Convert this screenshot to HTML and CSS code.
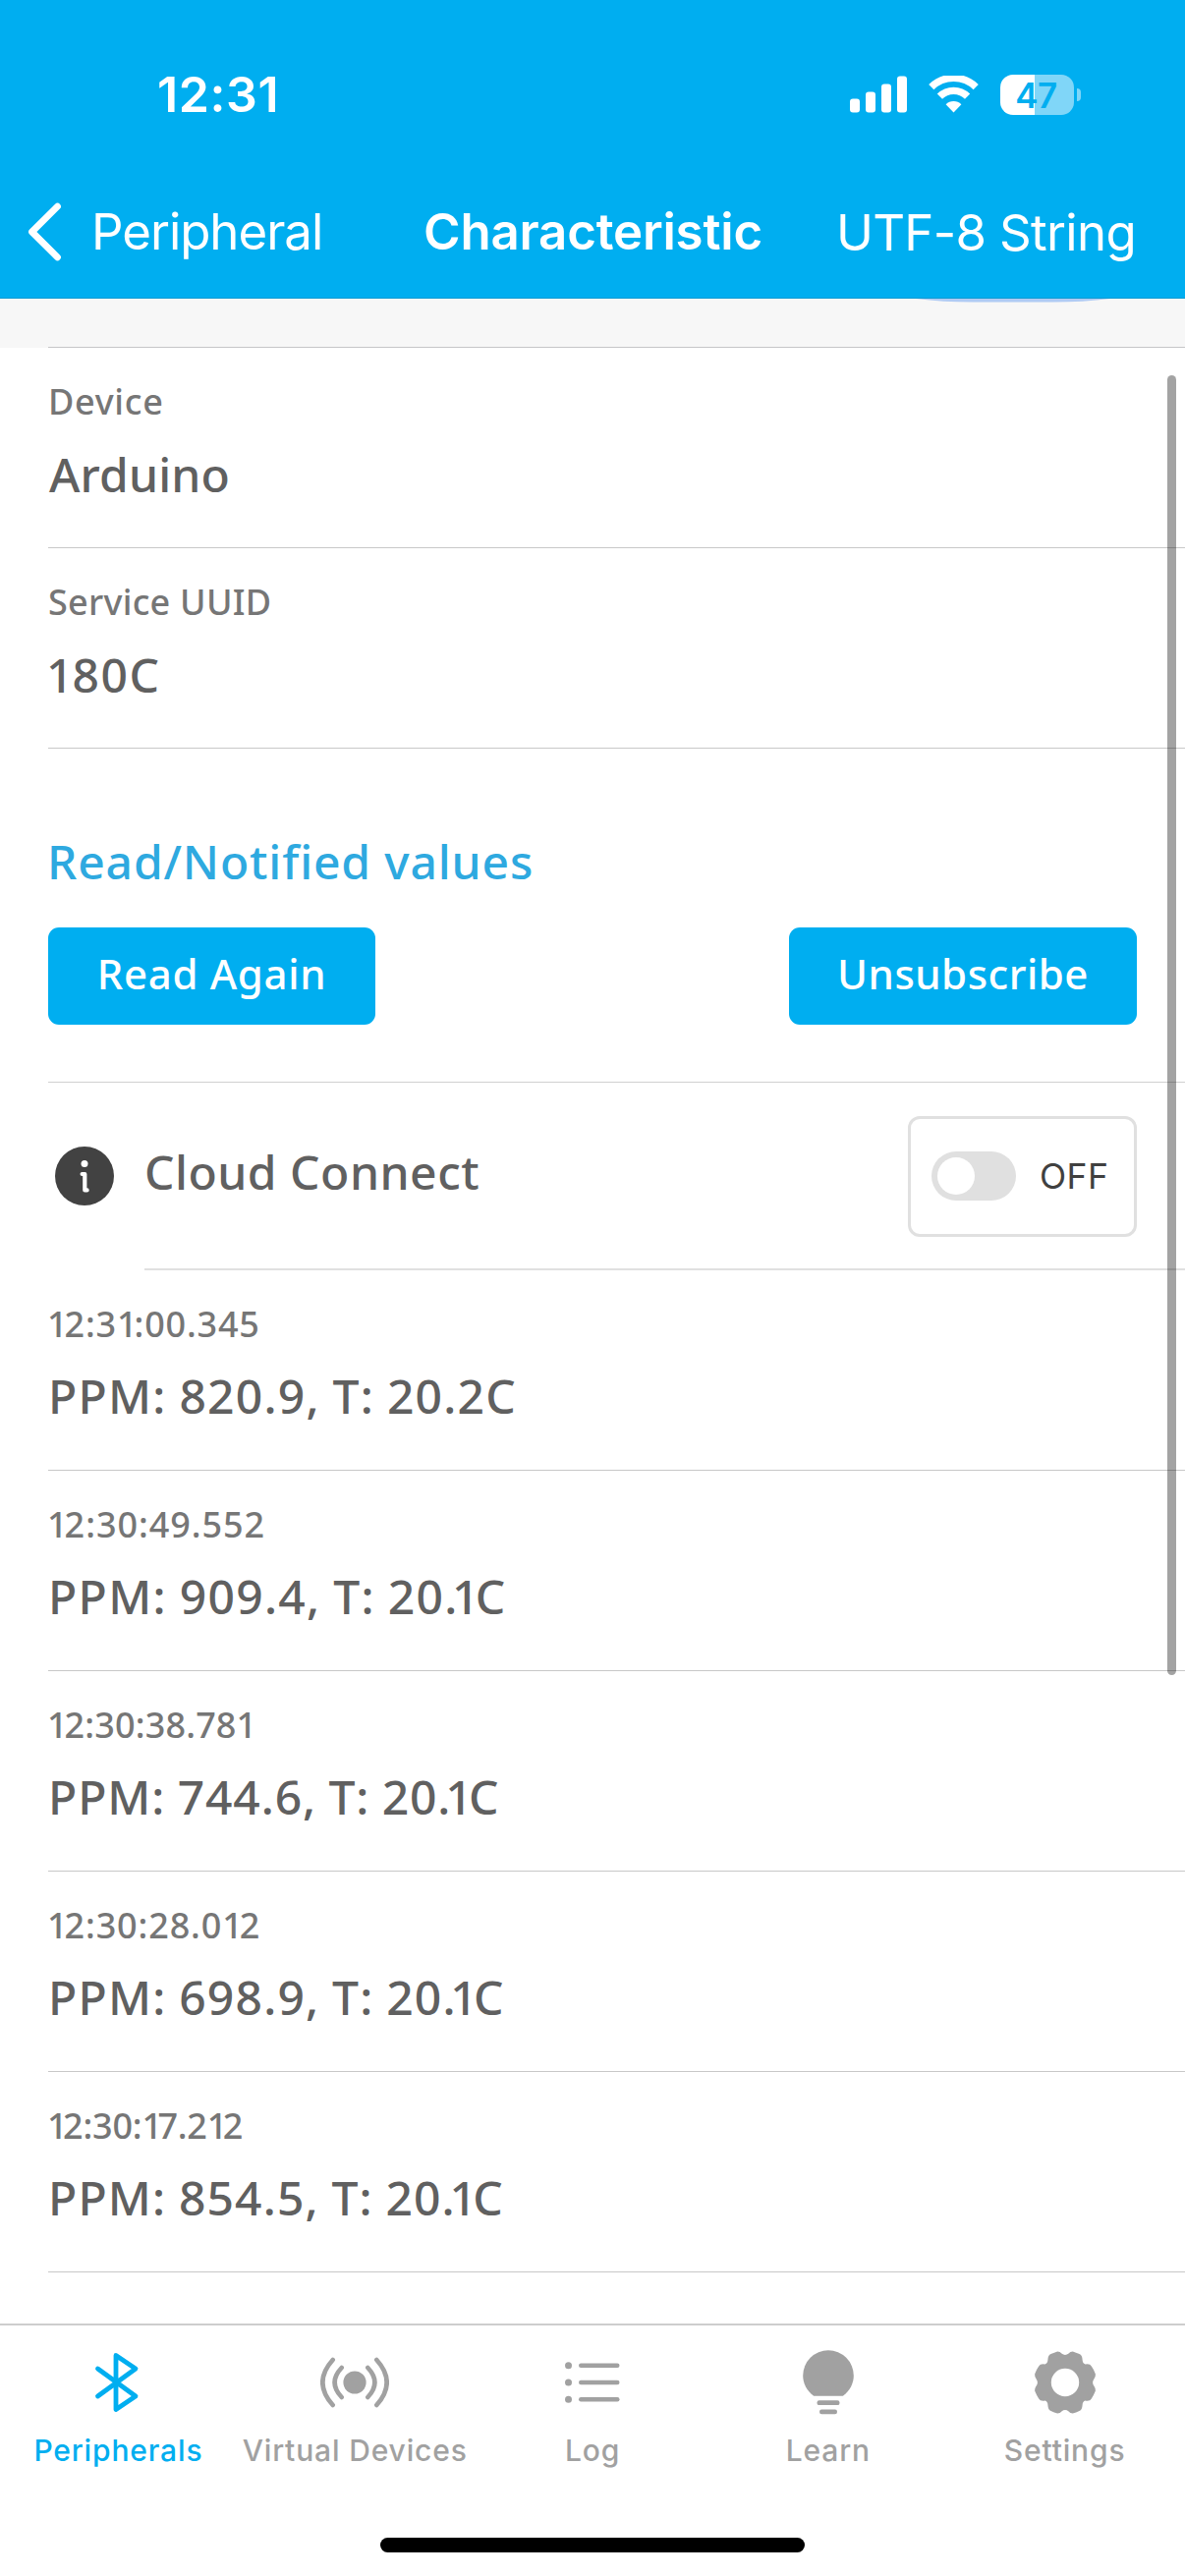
FILE: index.html
```html
<!DOCTYPE html>
<html lang="en">
<head>
<meta charset="utf-8">
<title>Characteristic</title>
<link rel="stylesheet" href="styles.css">
</head>
<body>
<div class="screen">
  <header class="header">
    <div class="status">
      <span class="time">12:31</span>
      <div class="indicators">
        <svg class="signal" width="58" height="38" viewBox="0 0 58 38" fill="#fff">
          <rect x="0" y="23.5" width="10" height="14" rx="3"/><rect x="16" y="16.5" width="10" height="21" rx="3"/><rect x="32" y="8.5" width="10" height="29" rx="3"/><rect x="48" y="0.5" width="10" height="37" rx="3"/>
        </svg>
        <svg class="wifi" width="51" height="38" viewBox="0 0 51 38">
          <g fill="none" stroke="#fff" stroke-width="7.4"><path d="M2.8 11.6A32.5 32.5 0 0 1 48.2 11.6"/><path d="M11.4 21.2A20 20 0 0 1 39.6 21.2"/></g>
          <path d="M17.6 29.3A11.3 11.3 0 0 1 33.4 29.3L25.5 37.5Z" fill="#fff"/>
        </svg>
        <div class="battery"><span class="cell">47</span><span class="cap"></span></div>
      </div>
    </div>
    <nav class="nav">
      <a class="back">
        <svg width="36" height="60" viewBox="0 0 36 60" fill="none" stroke="#fff" stroke-width="6.8" stroke-linecap="round" stroke-linejoin="round"><path d="M30.5 4.2L4.5 30L30.5 55.8"/></svg>
        <span>Peripheral</span>
      </a>
      <h1>Characteristic</h1>
      <a class="format">UTF-8 String</a>
    </nav>
  </header>

  <main class="content">
    <div class="band"><svg width="198" height="4" viewBox="0 0 198 4"><path d="M0 0H198Q170 3.6 140 3.6H58Q28 3.6 0 0Z" fill="#b0cbf4"/></svg></div>
    <section class="row info"><div class="label device">Device</div><div class="value">Arduino</div></section>
    <section class="row info"><div class="label">Service UUID</div><div class="value code"><i>1</i>80C</div></section>
    <section class="values">
      <h2>Read/Notified values</h2>
      <div class="buttons"><button class="read">Read Again</button><button class="unsub">Unsubscribe</button></div>
    </section>
    <section class="cloud">
      <svg class="info-icon" width="60" height="60" viewBox="0 0 60 60"><circle cx="30" cy="30" r="30" fill="#424242"/><circle cx="30" cy="17.5" r="3.5" fill="#fff"/><path d="M27.6 28H30.3V44.4H32.6" fill="none" stroke="#fff" stroke-width="4.2" stroke-linecap="round" stroke-linejoin="round"/></svg>
      <div class="cloud-body"><span class="cloud-title">Cloud Connect</span>
        <div class="toggle"><span class="switch"><span class="knob"></span></span><span class="off">OFF</span></div>
      </div>
    </section>
    <section class="row log r1"><div class="label"><i>1</i>2:3<i>1</i>:00.345</div><div class="value">PPM: 820.9, T: 20.2C</div></section>
    <section class="row log r2"><div class="label"><i>1</i>2:30:49.552</div><div class="value">PPM: 909.4, T: 20<i class="dot">.</i><i>1</i>C</div></section>
    <section class="row log r3"><div class="label"><i>1</i>2:30:38.781</div><div class="value">PPM: 744.6, T: 20<i class="dot">.</i><i>1</i>C</div></section>
    <section class="row log r4"><div class="label"><i>1</i>2:30:28.0<i>1</i>2</div><div class="value">PPM: 698.9, T: 20<i class="dot">.</i><i>1</i>C</div></section>
    <section class="row log r5"><div class="label"><i>1</i>2:30:<i>1</i>7.2<i>1</i>2</div><div class="value">PPM: 854.5, T: 20<i class="dot">.</i><i>1</i>C</div></section>
    <div class="scrollbar"></div>
  </main>

  <footer class="tabbar">
    <div class="tabs">
      <a class="tab active"><svg width="70" height="70" viewBox="-35 -35 70 70" fill="none" stroke="currentColor" stroke-width="4.8" stroke-linecap="round" stroke-linejoin="round"><path d="M-20.5 -14L18 14L-2 27.5V-27.5L18 -14L-20.5 14"/></svg><span>Peripherals</span></a>
      <a class="tab"><svg width="70" height="70" viewBox="-35 -35 70 70" fill="none" stroke="currentColor" stroke-width="4.6" stroke-linecap="round"><circle r="11.6" fill="currentColor" stroke="none"/><path d="M-13.3 -15Q-27.5 0 -13.3 15M13.3 -15Q27.5 0 13.3 15M-22.3 -23Q-43 0 -22.3 23M22.3 -23Q43 0 22.3 23"/></svg><span>Virtual Devices</span></a>
      <a class="tab"><svg width="70" height="70" viewBox="-36 -35 70 70" fill="currentColor"><circle cx="-24.5" cy="-17.3" r="3.5"/><circle cx="-24.5" r="3.5"/><circle cx="-24.5" cy="17.3" r="3.5"/><rect x="-14" y="-19.5" width="41.5" height="4.4" rx="2.2"/><rect x="-14" y="-2.2" width="41.5" height="4.4" rx="2.2"/><rect x="-14" y="15.1" width="41.5" height="4.4" rx="2.2"/></svg><span class="log-name">Log</span></a>
      <a class="tab"><svg width="70" height="70" viewBox="-35 -35 70 70" fill="currentColor"><path d="M-15.5 13.2C-22 8-25.8 1-25.8-7A25.8 25.8 0 0 1 25.8-7C25.8 1 22 8 15.5 13.2Q14.8 13.7 14 13.7H-14Q-14.8 13.7-15.5 13.2Z"/><rect x="-11.5" y="18.3" width="23" height="4.8" rx="2.2"/><rect x="-9" y="27.5" width="18" height="4.8" rx="2.2"/></svg><span>Learn</span></a>
      <a class="tab"><svg width="70" height="70" viewBox="-35 -35 70 70" fill="currentColor"><path fill-rule="evenodd" d="M-7.8 -31.6Q-5 -31.6 -3.6 -29.5Q0 -26.7 3.6 -29.5Q5 -31.6 7.8 -31.6Q11 -30.6 14.5 -29Q17.4 -27.8 17.6 -23Q17.8 -19.4 20.5 -18.6Q25.4 -19.5 26.8 -16.4Q29 -13.4 30.9 -8.6Q31.1 -6 29.5 -3.8Q26.7 0 29.5 3.8Q31.1 6 30.9 8.6Q29 13.4 26.8 16.4Q25.4 19.5 20.5 18.6Q17.8 19.4 17.6 23Q17.4 27.8 14.5 29Q11 30.6 7.8 31.6Q5 31.6 3.6 29.5Q0 26.7 -3.6 29.5Q-5 31.6 -7.8 31.6Q-11 30.6 -14.5 29Q-17.4 27.8 -17.6 23Q-17.8 19.4 -20.5 18.6Q-25.4 19.5 -26.8 16.4Q-29 13.4 -30.9 8.6Q-31.1 6 -29.5 3.8Q-26.7 0 -29.5 -3.8Q-31.1 -6 -30.9 -8.6Q-29 -13.4 -26.8 -16.4Q-25.4 -19.5 -20.5 -18.6Q-17.8 -19.4 -17.6 -23Q-17.4 -27.8 -14.5 -29Q-11 -30.6 -7.8 -31.6ZM0 -14.2A14.2 14.2 0 1 0 0 14.2A14.2 14.2 0 1 0 0 -14.2Z"/></svg><span>Settings</span></a>
    </div>
    <div class="home"></div>
  </footer>
</div>
</body>
</html>
```
FILE: styles.css
```css
* { box-sizing: border-box; }
body { margin: 0; background: #fff; }
.screen { width: 1206px; height: 2622px; display: flex; flex-direction: column; overflow: hidden; font-family: "Noto Sans", sans-serif; font-weight: 500; color: #606060; white-space: nowrap; }
i { font-style: normal; }

.header { height: 304px; flex: none; background: #00aef0; color: #fff; font-family: Inter, sans-serif; border-bottom: 1px solid #0d9bd2; }
.status { height: 192px; display: flex; justify-content: space-between; align-items: center; padding: 0 106px 0 160px; }
.time { font-size: 50px; font-weight: 600; letter-spacing: .6px; }
.indicators { display: flex; align-items: center; }
.wifi { margin-left: 22px; }
.battery { display: flex; align-items: center; margin-left: 22px; }
.cell { width: 75px; height: 41px; border-radius: 13px; background: linear-gradient(90deg, #fff 35px, #80d6f8 35px); color: #00aef0; font-size: 35px; font-weight: 600; line-height: 42px; text-align: center; letter-spacing: -.5px; padding-right: 2px; }
.cap { width: 4px; height: 13px; margin-left: 3px; border-radius: 0 4px 4px 0; background: #80d6f8; }
.nav { height: 88px; display: grid; grid-template-columns: 433px 1fr auto; align-items: center; padding-right: 50px; font-size: 51px; font-weight: 400; line-height: 60px; }
.back { display: flex; align-items: center; gap: 29px; padding-left: 28px; letter-spacing: -1.05px; }
h1 { margin: 0 0 0 -2px; font-size: 51px; font-weight: 600; line-height: 60px; letter-spacing: -.2px; }
.format { letter-spacing: -.7px; padding-top: 2px; }

.content { flex: 1; position: relative; overflow: hidden; }
.band { height: 50px; background: linear-gradient(#c6c6c8, #c6c6c8) 49px 49px / 100% 1px no-repeat #f7f7f7; padding-left: 932px; }
.band svg { display: block; }
.row { height: 204px; margin-left: 49px; padding-top: 31px; border-bottom: 1px solid #c8c8c8; display: flex; flex-direction: column; gap: 17px; }
.label { font-size: 36px; line-height: 48px; color: #767676; letter-spacing: .25px; }
.device { letter-spacing: .7px; }
.value { font-size: 48px; line-height: 64px; letter-spacing: .15px; }
.info .value { margin-left: 1px; padding-top: 1px; }
.info .code { letter-spacing: 1.6px; margin-left: -2px; }
.code i { letter-spacing: -1px; }
.log .label { margin-left: -1px; }
.log i { letter-spacing: -3px; }
.log .value { word-spacing: -1px; }
.log .value i { letter-spacing: -3.8px; }
.log .value .dot { letter-spacing: -5.2px; }
.r1 .label { letter-spacing: .8px; } .r1 .value { letter-spacing: 1.25px; }
.r2 .label { letter-spacing: .95px; } .r2 .value { letter-spacing: 1.3px; }
.r3 .label { letter-spacing: .15px; } .r3 .value { letter-spacing: .9px; }
.r4 .label { letter-spacing: .85px; } .r4 .value { letter-spacing: 1.2px; }
.r5 .label { letter-spacing: -.2px; } .r5 .value { letter-spacing: 1.15px; }
.r5 .label i { letter-spacing: -4.6px; }

.values { height: 340px; margin-left: 49px; padding: 83px 49px 0 0; border-bottom: 1px solid #d0d0d0; }
h2 { margin: 0 0 0 -1px; font-size: 48px; font-weight: 500; line-height: 64px; letter-spacing: .85px; color: #2ea9e0; }
.buttons { display: flex; justify-content: space-between; margin-top: 35px; }
button { height: 99px; border: 0; border-radius: 11px; padding: 0 0 6px; background: #00aef0; color: #fff; font: 500 42px/56px "Noto Sans", sans-serif; }
.read { width: 333px; letter-spacing: .65px; }
.unsub { width: 354px; letter-spacing: .5px; }
.cloud { height: 191px; display: flex; align-items: center; padding-left: 56px; }
.info-icon { margin: 0 31px 2px 0; }
.cloud-body { flex: 1; height: 191px; display: flex; align-items: center; justify-content: space-between; padding-right: 49px; border-bottom: 2px solid #e0e0e0; }
.cloud-title { font-size: 48px; line-height: 64px; letter-spacing: .5px; padding-bottom: 7px; }
.toggle { width: 233px; height: 123px; margin-top: 1px; border: 3px solid #e0e0e0; border-radius: 12px; display: flex; align-items: center; padding-left: 21px; }
.switch { width: 86px; height: 50px; border-radius: 25px; background: #e0e0e0; padding: 6px; }
.knob { display: block; width: 38px; height: 38px; border-radius: 50%; background: #fff; }
.off { margin-left: 24px; padding-top: 2px; font: 400 35.5px/48px Inter, sans-serif; color: #404040; letter-spacing: .4px; }
.scrollbar { position: absolute; left: 1188px; top: 78px; width: 9px; height: 1323px; border-radius: 5px; background: rgba(0, 0, 0, .36); }

.tabbar { height: 257px; flex: none; border-top: 2px solid #cdcdcd; background: #fff; display: flex; flex-direction: column; align-items: center; justify-content: space-between; padding-bottom: 24px; }
.tabs { display: grid; grid-template-columns: repeat(5, 1fr); width: 100%; padding: 23px 2px 0 0; }
.tab { display: flex; flex-direction: column; align-items: center; color: #a1a1a1; font: 500 30px/40px Inter, sans-serif; letter-spacing: .85px; }
.tab span { margin-top: 14px; }
.tab .log-name { margin-left: 2px; }
.active { color: #00aef0; }
.home { width: 432px; height: 15px; border-radius: 8px; background: #000; }
```
